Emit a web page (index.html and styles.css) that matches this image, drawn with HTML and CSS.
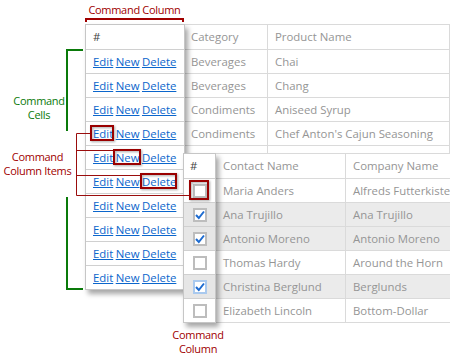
FILE: index.html
```html
<!DOCTYPE html>
<html>
<head>
  <meta charset="utf-8" />
  <title>Command Column</title>
  <meta name="viewport" content="width=device-width, initial-scale=1">
  <link rel="stylesheet" href="styles.css">
</head>
<body>
  <div class="canvas">
    <div class="note note-top">Command Column</div>
    <div class="note note-cells">Command<br>Cells</div>
    <div class="note note-items">Command<br>Column Items</div>
    <div class="note note-bottom">Command<br>Column</div>

    <div class="grid products">
      <div class="row head"><div class="cell c-cmd"></div><div class="cell c-cat">Category</div><div class="cell c-prod">Product Name</div></div>
      <div class="row"><div class="cell c-cmd"></div><div class="cell c-cat">Beverages</div><div class="cell c-prod">Chai</div></div>
      <div class="row"><div class="cell c-cmd"></div><div class="cell c-cat">Beverages</div><div class="cell c-prod">Chang</div></div>
      <div class="row"><div class="cell c-cmd"></div><div class="cell c-cat">Condiments</div><div class="cell c-prod">Aniseed Syrup</div></div>
      <div class="row"><div class="cell c-cmd"></div><div class="cell c-cat">Condiments</div><div class="cell c-prod">Chef Anton's Cajun Seasoning</div></div>
      <div class="row"><div class="cell c-cmd"></div><div class="cell c-cat"></div><div class="cell c-prod"></div></div>
    </div>

    <div class="panel commands">
      <div class="pcell head">#</div>
      <div class="pcell"><a>Edit</a> <a>New</a> <a>Delete</a></div>
      <div class="pcell"><a>Edit</a> <a>New</a> <a>Delete</a></div>
      <div class="pcell"><a>Edit</a> <a>New</a> <a>Delete</a></div>
      <div class="pcell"><a>Edit</a> <a>New</a> <a>Delete</a></div>
      <div class="pcell"><a>Edit</a> <a>New</a> <a>Delete</a></div>
      <div class="pcell"><a>Edit</a> <a>New</a> <a>Delete</a></div>
      <div class="pcell"><a>Edit</a> <a>New</a> <a>Delete</a></div>
      <div class="pcell"><a>Edit</a> <a>New</a> <a>Delete</a></div>
      <div class="pcell"><a>Edit</a> <a>New</a> <a>Delete</a></div>
      <div class="pcell last"><a>Edit</a> <a>New</a> <a>Delete</a></div>
    </div>

    <div class="grid customers">
      <div class="row head"><div class="cell c-sel"></div><div class="cell c-contact">Contact Name</div><div class="cell c-company">Company Name</div></div>
      <div class="row"><div class="cell c-sel"></div><div class="cell c-contact">Maria Anders</div><div class="cell c-company">Alfreds Futterkiste</div></div>
      <div class="row sel"><div class="cell c-sel"></div><div class="cell c-contact">Ana Trujillo</div><div class="cell c-company">Ana Trujillo</div></div>
      <div class="row sel"><div class="cell c-sel"></div><div class="cell c-contact">Antonio Moreno</div><div class="cell c-company">Antonio Moreno</div></div>
      <div class="row"><div class="cell c-sel"></div><div class="cell c-contact">Thomas Hardy</div><div class="cell c-company">Around the Horn</div></div>
      <div class="row sel"><div class="cell c-sel"></div><div class="cell c-contact">Christina Berglund</div><div class="cell c-company">Berglunds</div></div>
      <div class="row"><div class="cell c-sel"></div><div class="cell c-contact">Elizabeth Lincoln</div><div class="cell c-company">Bottom-Dollar</div></div>
    </div>

    <div class="panel checks">
      <div class="pcell head">#</div>
      <div class="pcell"><span class="cb"></span></div>
      <div class="pcell sel"><span class="cb"><svg viewBox="0 0 10 10"><path d="M1 5 L3.8 8 L9 1.5"/></svg></span></div>
      <div class="pcell sel"><span class="cb"><svg viewBox="0 0 10 10"><path d="M1 5 L3.8 8 L9 1.5"/></svg></span></div>
      <div class="pcell"><span class="cb"></span></div>
      <div class="pcell sel"><span class="cb focus"><svg viewBox="0 0 10 10"><path d="M1 5 L3.8 8 L9 1.5"/></svg></span></div>
      <div class="pcell last"><span class="cb"></span></div>
    </div>

    <svg class="marks" width="450" height="358" viewBox="0 0 450 358">
      <path class="red-thick" d="M86 22 V19 H183 V22" />
      <path class="green" d="M83 50 H67 V131" />
      <path class="green" d="M67 197 V289 H83" />
      <path class="red-thin" d="M90 133.5 H76.5 V195.5 H189 M76.5 150.5 H113 M76.5 175.5 H140" />
      <g class="boxes">
        <rect x="91" y="126" width="22" height="14" />
        <rect x="114" y="150" width="26" height="14" />
        <rect x="141" y="174" width="35" height="14" />
        <rect x="190" y="181" width="18" height="18" />
      </g>
    </svg>
  </div>
</body>
</html>
```

FILE: styles.css
```css
* { margin: 0; padding: 0; box-sizing: border-box; }
body { font-family: "Open Sans", "Liberation Sans", sans-serif; font-size: 11.4px; background: #fff; }
.canvas { position: relative; width: 450px; height: 358px; overflow: hidden; }

.note { position: absolute; font-size: 11px; letter-spacing: -0.3px; line-height: 13.5px; text-align: center; white-space: nowrap; }
.note-top { left: 85px; top: 3px; width: 99px; color: #a00000; }
.note-cells { left: 4px; top: 94px; width: 70px; color: #0a7a0a; }
.note-items { left: 0; top: 150px; width: 75px; color: #a00000; }
.note-bottom { left: 168px; top: 328px; width: 60px; color: #a00000; }

.grid { position: absolute; background: #fff; border-top: 1px solid #dadada; color: #959595; }
.products { left: 85px; top: 24px; width: 365px; }
.customers { left: 183px; top: 153px; width: 300px; }
.row { display: flex; height: 24px; }
.row.head { height: 25px; }
.row.sel { background: #ebebeb; }
.cell { height: 100%; border-right: 1px solid #dadada; border-bottom: 1px solid #dadada; padding-left: 7px; line-height: 23px; white-space: nowrap; overflow: hidden; }
.head .cell { line-height: 24px; }
.c-cmd { width: 99px; }
.c-cat { width: 84px; }
.c-prod { width: 182px; }
.c-sel { width: 33px; }
.c-contact { width: 130px; }
.c-company { width: 137px; }

.panel { position: absolute; background: #fff; border: 1px solid #c6c6c6; box-shadow: 3px 4px 5px rgba(0, 0, 0, 0.35); }
.commands { left: 85px; top: 24px; width: 100px; }
.checks { left: 183px; top: 153px; width: 33px; }
.pcell { height: 24px; border-bottom: 1px solid #d0d0d0; line-height: 23px; padding-left: 7px; white-space: nowrap; word-spacing: -0.5px; }
.pcell.head { height: 25px; line-height: 24px; color: #444; }
.pcell.last { height: 23px; border-bottom: 0; }
.pcell.sel { background: #e6e6e6; }
.pcell a { color: #0b66cc; text-decoration: underline; }
.checks .pcell { display: flex; align-items: center; justify-content: center; padding-left: 0; }
.checks .pcell.head { justify-content: flex-start; padding-left: 6px; }

.cb { display: block; width: 14px; height: 14px; border: 2px solid #bdbdbd; background: #fff; }
.cb.focus { border-color: #a9c9ee; }
.cb svg { display: block; width: 10px; height: 10px; fill: none; stroke: #1d6bd0; stroke-width: 2; }

.marks { position: absolute; left: 0; top: 0; fill: none; }
.red-thick { stroke: #a00000; stroke-width: 2; }
.green { stroke: #0a7a0a; stroke-width: 2; }
.red-thin { stroke: #9a0d0d; stroke-width: 1; }
.boxes rect { stroke: #9a0000; stroke-width: 2; filter: drop-shadow(1px 1px 1px rgba(0, 0, 0, 0.35)); }
```
